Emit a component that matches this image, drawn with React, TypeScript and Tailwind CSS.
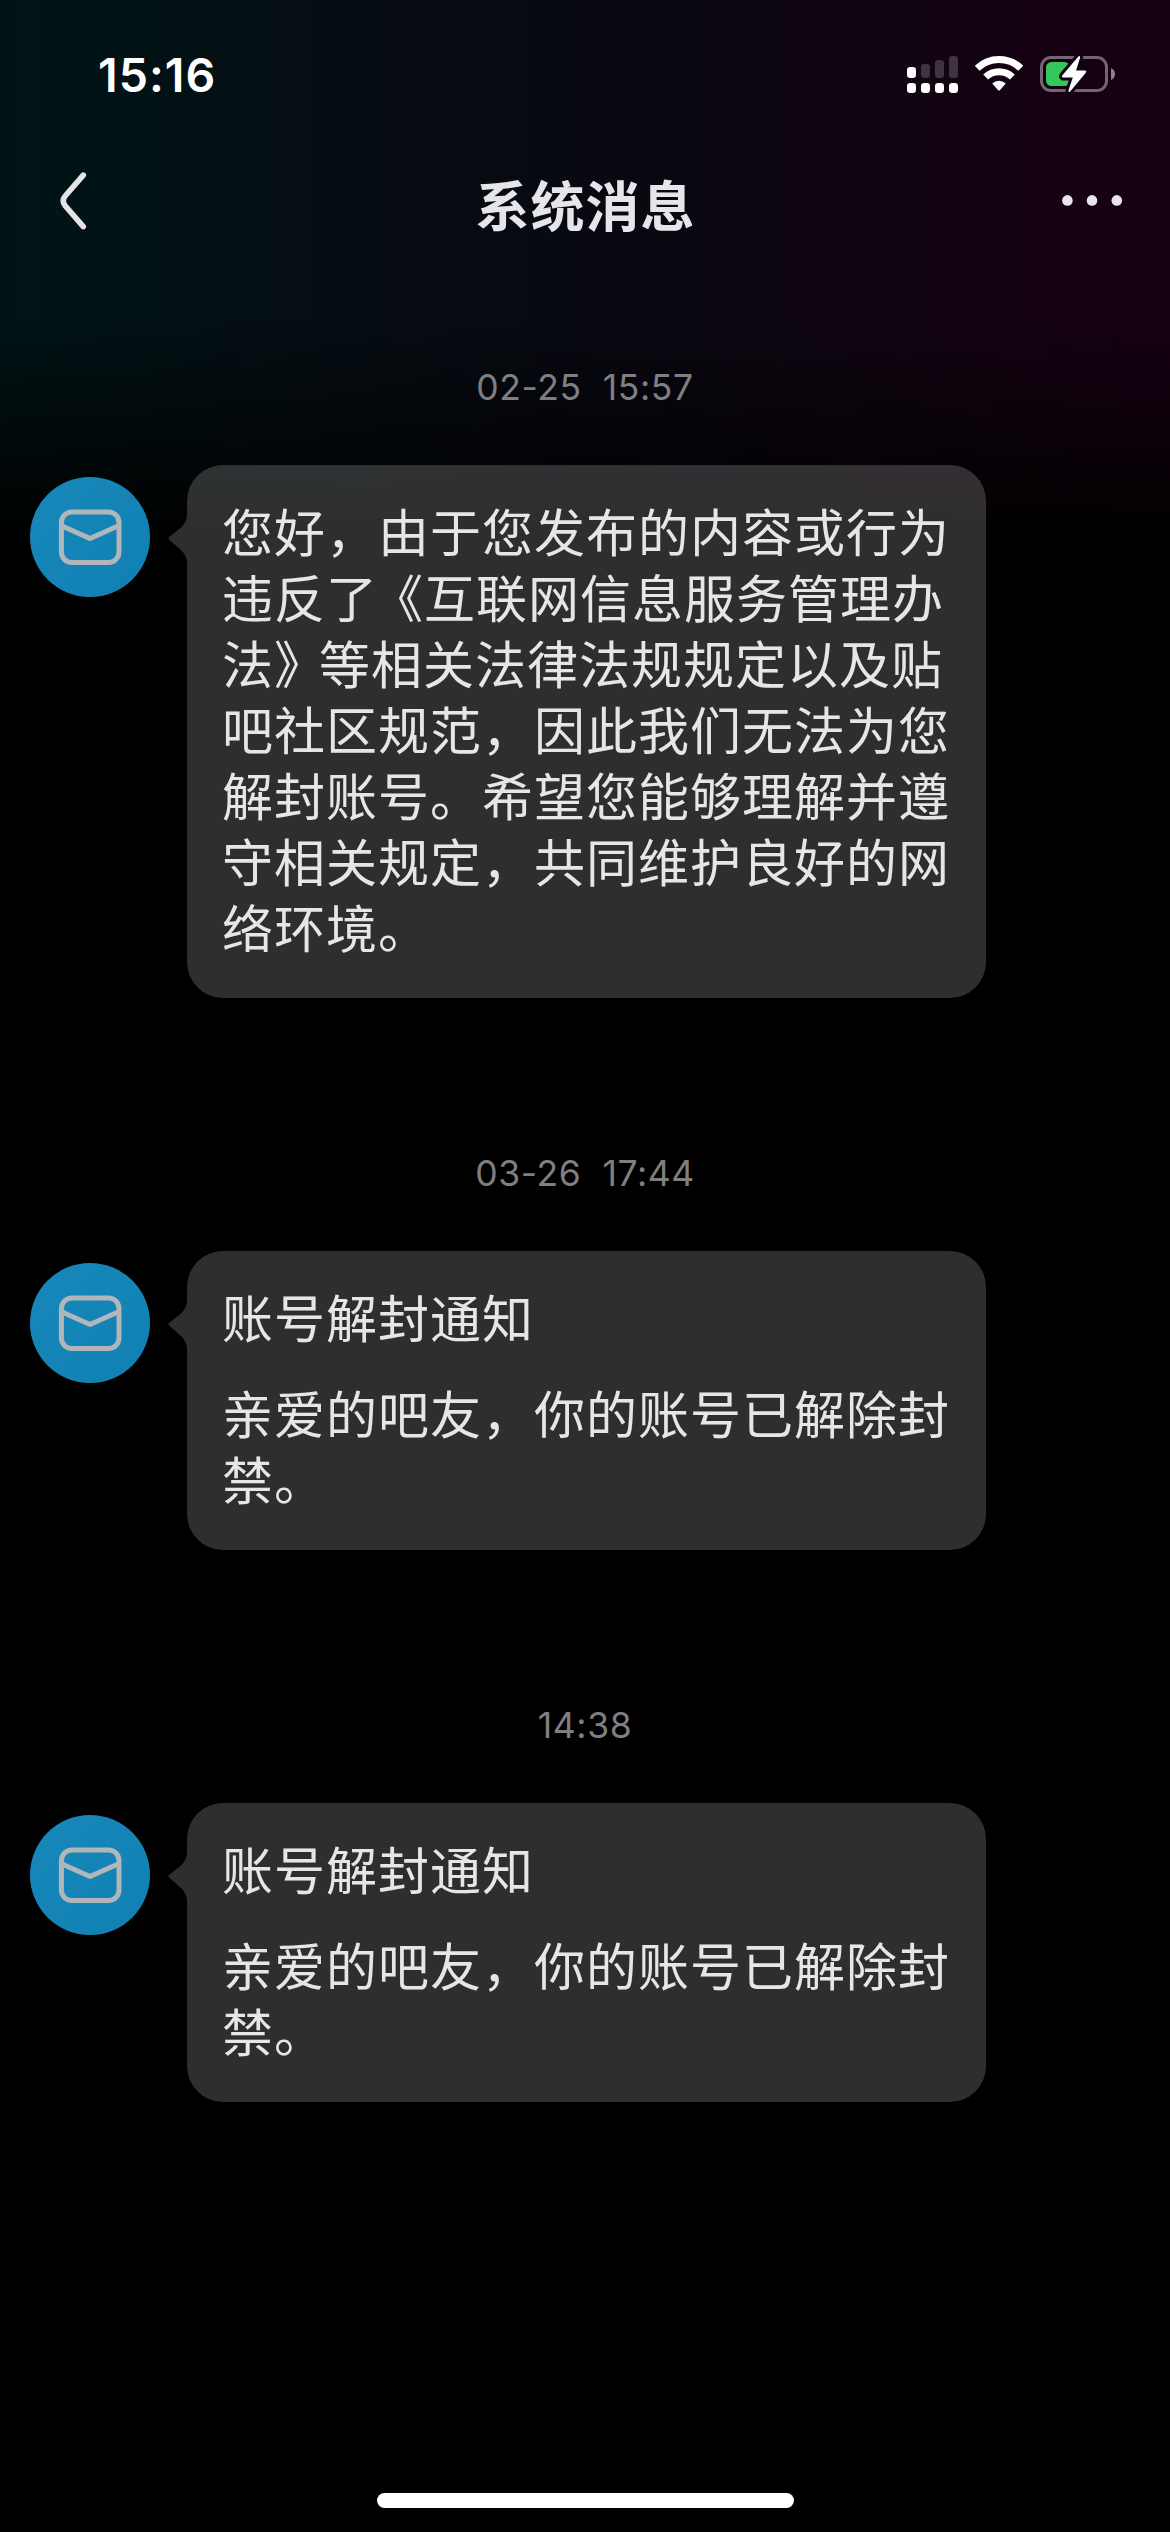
import type { ReactNode } from "react";

const zh = "font-['Noto_Sans_CJK_SC',sans-serif]";

function StatusBar() {
  return (
    <div className="flex h-[147px] w-full items-start justify-between pt-[44px] pl-[98px] pr-[54px]">
      <span className="mt-px font-['Inter',sans-serif] text-[46.5px] leading-[60px] font-semibold tracking-[1px] text-white">
        15:16
      </span>
      <svg width="211" height="46" viewBox="905 50 211 46" className="mt-[6px]">
        <g fill="#fff">
          <rect x="907" y="67" width="9" height="11" rx="3.2" />
          <rect x="907" y="83" width="9" height="10" rx="3.2" />
          <rect x="921" y="83" width="9" height="10" rx="3.2" />
          <rect x="935" y="83" width="9" height="10" rx="3.2" />
          <rect x="949" y="83" width="9" height="10" rx="3.2" />
        </g>
        <g fill="#3f3341">
          <rect x="921" y="64" width="9" height="14" rx="3.2" />
          <rect x="935" y="60" width="9" height="18" rx="3.2" />
          <rect x="949" y="56" width="9" height="22" rx="3.2" />
        </g>
        <g fill="none" stroke="#fff" strokeWidth="7">
          <path d="M977.2 68.3 A31.5 31.5 0 0 1 1020.8 68.3" />
          <path d="M985.6 77 A19.5 19.5 0 0 1 1012.4 77" />
        </g>
        <path d="M992.2 83.4 A10.2 10.2 0 0 1 1005.8 83.4 L999.8 90.3 Q999 91.2 998.2 90.3 Z" fill="#fff" />
        <rect x="1041.5" y="57.5" width="65" height="33" rx="9.5" fill="none" stroke="#736572" strokeWidth="3" />
        <path d="M1111 68 Q1115 70 1115 74 Q1115 78 1111 80 Z" fill="#8d828c" />
        <rect x="1046" y="62" width="24" height="24" rx="5.5" fill="#34c759" />
        <path
          d="M1078.4 56.5 Q1080.6 55 1080 58 L1076 70.6 L1085 70.6 Q1087.2 71 1085.6 73 L1070.2 91.5 Q1068 93 1068.6 90 L1072.8 77.6 L1063 77.6 Q1061 77 1062.6 75 Z"
          fill="#fff"
          stroke="#120312"
          strokeWidth="6"
          paintOrder="stroke"
        />
      </svg>
    </div>
  );
}

function NavBar() {
  return (
    <div className="flex h-[120px] w-full items-start justify-between pl-[56px] pr-[46px]">
      <svg width="120" height="60" viewBox="56 171 120 60" className="mt-[24px]">
        <path
          d="M83.3 175.2 L65.2 196 Q61.3 200.8 65.2 205.8 L83.3 226.6"
          fill="none"
          stroke="#e4e4e8"
          strokeWidth="5.6"
          strokeLinecap="round"
        />
      </svg>
      <h1 className={`${zh} mt-[17px] pr-[9px] text-[54px] leading-[80px] font-bold tracking-[1px] text-[#e6e6ea]`}>
        系统消息
      </h1>
      <svg width="120" height="60" viewBox="1004 171 120 60" className="mt-[24px]">
        <g fill="#e8e4e8">
          <circle cx="1067.4" cy="200.4" r="5.3" />
          <circle cx="1092" cy="200.4" r="5.3" />
          <circle cx="1116.8" cy="200.4" r="5.3" />
        </g>
      </svg>
    </div>
  );
}

function Avatar() {
  return (
    <div className="mt-[12px] flex size-[120px] shrink-0 items-center justify-center rounded-full bg-linear-to-br from-[#1888bb] to-[#1080b3]">
      <svg width="66" height="60" viewBox="0 0 66 60" fill="none" stroke="#b0b7bb" strokeWidth="5" strokeLinejoin="round">
        <rect x="4.4" y="4.9" width="57.6" height="50.6" rx="10.5" />
        <path d="M5 19 L33 31.5 L61 19" />
      </svg>
    </div>
  );
}

function Message({ time, children }: { time: string; children: ReactNode }) {
  return (
    <section className="mb-[127px] flex flex-col">
      <time className="h-[126px] pt-[12px] text-center font-['Inter',sans-serif] text-[35.5px] leading-[74px] tracking-[0.6px] whitespace-pre text-[#7f7f82]">
        {time}
      </time>
      <div className="flex items-start pl-[30px]">
        <Avatar />
        <svg width="20" height="50" viewBox="0 0 20 50" className="mt-[48px] ml-[17px] fill-white/18">
          <path d="M20 3 Q19 10 14 14.5 L2 24 Q0.6 25.2 2 26.4 L14 37 Q19 42 20 48 Z" />
        </svg>
        <div
          className={`${zh} w-[799px] rounded-[36px] bg-white/18 pt-[32px] pb-[39px] pl-[35px] text-[51px] leading-[66px] tracking-[1px] whitespace-nowrap text-[#e6e6e6]`}
        >
          {children}
        </div>
      </div>
    </section>
  );
}

function UnbanNotice() {
  return (
    <>
      <p className="mb-[30px]">账号解封通知</p>
      <p>
        亲爱的吧友，你的账号已解除封
        <br />
        禁。
      </p>
    </>
  );
}

export default function App() {
  return (
    <div className="relative h-[2532px] w-[1170px] overflow-hidden bg-black">
      <div className="absolute inset-x-0 top-0 h-[545px] bg-linear-to-r from-[#001416] via-[#080911] to-[#170012] mask-[linear-gradient(to_bottom,black_58%,transparent)]" />
      <div className="relative flex h-full flex-col">
        <StatusBar />
        <NavBar />
        <main className="flex flex-1 flex-col pt-[72px]">
          <Message time="02-25  15:57">
            <p>
              您好，由于您发布的内容或行为
              <br />
              违反了<span className="-ml-[6px]">《</span>互联网信息服务管理办
              <br />
              法<span className="-mr-[7px]">》</span>等相关法律法规规定以及贴
              <br />
              吧社区规范，因此我们无法为您
              <br />
              解封账号。希望您能够理解并遵
              <br />
              守相关规定，共同维护良好的网
              <br />
              络环境。
            </p>
          </Message>
          <Message time="03-26  17:44">
            <UnbanNotice />
          </Message>
          <Message time="14:38">
            <UnbanNotice />
          </Message>
        </main>
        <div className="mb-[24px] h-[15px] w-[417px] self-center rounded-full bg-white" />
      </div>
    </div>
  );
}
